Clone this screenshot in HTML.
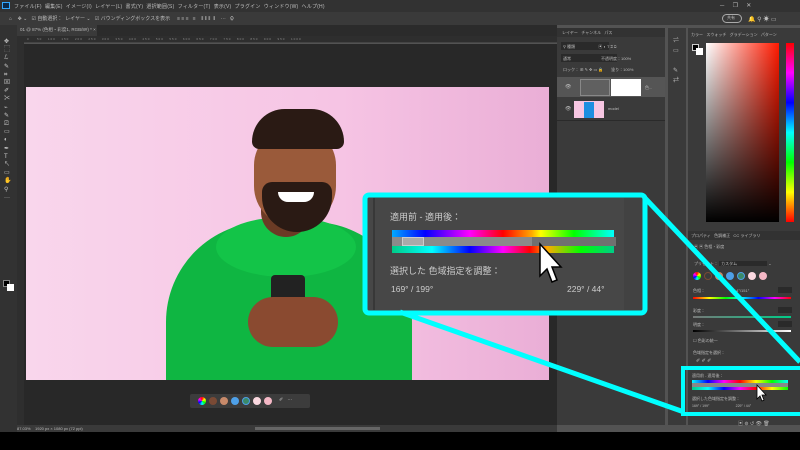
<!DOCTYPE html>
<html><head><meta charset="utf-8"><style>
*{margin:0;padding:0;box-sizing:border-box}
body{width:800px;height:450px;overflow:hidden;background:#000;font-family:"Liberation Sans","Noto Sans CJK JP",sans-serif;position:relative;color:#ccc}
.a{position:absolute}
.t{font-size:5px;color:#bbb;white-space:nowrap}
</style></head><body>
<div class="a" style="left:0;top:0;width:800px;height:432px;background:#535353"></div>
<!-- menu bar -->
<div class="a" style="left:0;top:0;width:800px;height:12px;background:#323232"></div>
<div class="a" style="left:2px;top:2px;width:8px;height:7px;background:#0b2a4a;border:1px solid #31a8ff"></div>
<div class="a t" style="left:14px;top:3px;letter-spacing:0.2px">ファイル(F)&nbsp; 編集(E)&nbsp; イメージ(I)&nbsp; レイヤー(L)&nbsp; 書式(Y)&nbsp; 選択範囲(S)&nbsp; フィルター(T)&nbsp; 表示(V)&nbsp; プラグイン&nbsp; ウィンドウ(W)&nbsp; ヘルプ(H)</div>
<div class="a t" style="left:720px;top:2px;font-size:6px">─&nbsp;&nbsp;&nbsp;&nbsp;&nbsp;❐&nbsp;&nbsp;&nbsp;&nbsp;&nbsp;✕</div>
<!-- options -->
<div class="a" style="left:0;top:12px;width:800px;height:13px;background:#3a3a3a"></div>
<div class="a t" style="left:9px;top:15px">⌂&nbsp;&nbsp;&nbsp; ✥ ⌄&nbsp;&nbsp; ☑ 自動選択：&nbsp; レイヤー ⌄&nbsp;&nbsp; ☑ バウンディングボックスを表示&nbsp;&nbsp;&nbsp;&nbsp; ≡ ≡ ≡ &nbsp; ≡&nbsp;&nbsp;&nbsp; ⫴ ⫴ ⫴ &nbsp;⫴&nbsp;&nbsp;&nbsp; ··· &nbsp;&nbsp;⚙</div>
<div class="a" style="left:722px;top:14px;width:20px;height:9px;border:1px solid #aaa;border-radius:5px"></div>
<div class="a t" style="left:727px;top:15px;font-size:4px">共有</div>
<div class="a t" style="left:748px;top:14px;font-size:6px">🔔 ⚲ ☀ ▭</div>
<!-- tab bar -->
<div class="a" style="left:17px;top:25px;width:540px;height:11px;background:#2b2b2b"></div>
<div class="a" style="left:17px;top:25px;width:80px;height:11px;background:#3a3a3a"></div>
<div class="a t" style="left:20px;top:27px;font-size:4.5px">01 @ 87% (色相・彩度1, RGB/8#) * ×</div>
<!-- rulers -->
<div class="a" style="left:17px;top:36px;width:540px;height:7px;background:#2e2e2e;border-bottom:1px solid #444"></div>
<div class="a t" style="left:27px;top:37px;font-size:3px;color:#888;letter-spacing:1px">0&nbsp;&nbsp;&nbsp;&nbsp;50&nbsp;&nbsp;&nbsp;100&nbsp;&nbsp;&nbsp;150&nbsp;&nbsp;&nbsp;200&nbsp;&nbsp;&nbsp;250&nbsp;&nbsp;&nbsp;300&nbsp;&nbsp;&nbsp;350&nbsp;&nbsp;&nbsp;400&nbsp;&nbsp;&nbsp;450&nbsp;&nbsp;&nbsp;500&nbsp;&nbsp;&nbsp;550&nbsp;&nbsp;&nbsp;600&nbsp;&nbsp;&nbsp;650&nbsp;&nbsp;&nbsp;700&nbsp;&nbsp;&nbsp;750&nbsp;&nbsp;&nbsp;800&nbsp;&nbsp;&nbsp;850&nbsp;&nbsp;&nbsp;900&nbsp;&nbsp;&nbsp;950&nbsp;&nbsp;&nbsp;1000</div>
<div class="a" style="left:17px;top:36px;width:7px;height:389px;background:#2e2e2e"></div>
<!-- toolbar -->
<div class="a" style="left:0;top:25px;width:17px;height:407px;background:#323232"></div>
<div class="a t" style="left:4px;top:38px;font-size:6px;line-height:8.2px;color:#ccc">✥<br>⬚<br>ℒ<br>✎<br>⌗<br>⊠<br>✐<br>✂<br>⌁<br>✎<br>⎚<br>▭<br>◐<br>✒<br>T<br>↖<br>▭<br>✋<br>⚲<br>···</div>
<div class="a" style="left:3px;top:280px;width:7px;height:7px;background:#000;border:1px solid #888"></div>
<div class="a" style="left:7px;top:284px;width:7px;height:7px;background:#fff"></div>
<!-- canvas -->
<div class="a" style="left:24px;top:44px;width:533px;height:381px;background:#282828"></div>
<div class="a" style="left:26px;top:87px;width:523px;height:293px;background:linear-gradient(90deg,#f9d6ec,#f6c4e4 60%,#eaaed6);overflow:hidden">
 <!-- hoodie -->
 <div class="a" style="left:140px;top:135px;width:246px;height:200px;background:#0fb642;border-radius:100px 100px 0 0"></div>
 <div class="a" style="left:190px;top:130px;width:140px;height:60px;background:#13c448;border-radius:50%"></div>
 <!-- neck -->
 <div class="a" style="left:235px;top:110px;width:50px;height:40px;background:#6b3b25;border-radius:0 0 25px 25px"></div>
 <!-- head -->
 <div class="a" style="left:228px;top:40px;width:82px;height:100px;background:#9a5a3a;border-radius:42px 42px 45px 45px"></div>
 <div class="a" style="left:226px;top:22px;width:92px;height:40px;background:#2a1a14;border-radius:45px 45px 10px 10px"></div>
 <div class="a" style="left:236px;top:95px;width:70px;height:50px;background:#2a1a14;border-radius:10px 10px 35px 35px"></div>
 <div class="a" style="left:252px;top:105px;width:36px;height:10px;background:#fff;border-radius:0 0 18px 18px"></div>
 <!-- phone & hands -->
 <div class="a" style="left:245px;top:188px;width:34px;height:40px;background:#222;border-radius:4px"></div>
 <div class="a" style="left:222px;top:210px;width:90px;height:50px;background:#8a4a30;border-radius:30px"></div>
</div>
<!-- floating swatch bar -->
<div class="a" style="left:190px;top:394px;width:120px;height:14px;background:#3c3c3c;border-radius:2px"></div>
<div class="a" style="left:198px;top:397px;width:8px;height:8px;border-radius:50%;background:conic-gradient(red,yellow,lime,cyan,blue,magenta,red)"></div>
<div class="a" style="left:209px;top:397px;width:8px;height:8px;border-radius:50%;background:#7a4a35"></div>
<div class="a" style="left:220px;top:397px;width:8px;height:8px;border-radius:50%;background:#c88a6a"></div>
<div class="a" style="left:231px;top:397px;width:8px;height:8px;border-radius:50%;background:#4ea0e8"></div>
<div class="a" style="left:242px;top:397px;width:8px;height:8px;border-radius:50%;background:#3a8a6a;border:1px solid #4ea0e8"></div>
<div class="a" style="left:253px;top:397px;width:8px;height:8px;border-radius:50%;background:#fbd8e0"></div>
<div class="a" style="left:264px;top:397px;width:8px;height:8px;border-radius:50%;background:#f5b8c6"></div>
<div class="a t" style="left:279px;top:397px">✐&nbsp;&nbsp;&nbsp;···</div>
<!-- status -->
<div class="a" style="left:17px;top:425px;width:540px;height:7px;background:#3a3a3a"></div>
<div class="a t" style="left:17px;top:426px;font-size:4px">87.03%&nbsp;&nbsp;&nbsp; 1920 px × 1080 px (72 ppi)</div>
<div class="a" style="left:255px;top:427px;width:125px;height:3px;background:#666"></div>
<!-- layers panel -->
<div class="a" style="left:557px;top:28px;width:108px;height:397px;background:#3a3a3a"></div>
<div class="a" style="left:557px;top:28px;width:108px;height:9px;background:#323232"></div>
<div class="a t" style="left:562px;top:30px;font-size:4px">レイヤー&nbsp;&nbsp; チャンネル&nbsp;&nbsp; パス</div>
<div class="a" style="left:561px;top:42px;width:48px;height:8px;background:#2a2a2a"></div>
<div class="a t" style="left:563px;top:44px;font-size:4px">⚲ 種類&nbsp;&nbsp;&nbsp;&nbsp;&nbsp;&nbsp;&nbsp;&nbsp;&nbsp;&nbsp;&nbsp;&nbsp;&nbsp;&nbsp;&nbsp;&nbsp;&nbsp;&nbsp;&nbsp;&nbsp; ▣ ◐ T ⌗ ⊡</div>
<div class="a" style="left:561px;top:54px;width:56px;height:8px;background:#2a2a2a"></div>
<div class="a t" style="left:563px;top:56px;font-size:4px">通常&nbsp;&nbsp;&nbsp;&nbsp;&nbsp;&nbsp;&nbsp;&nbsp;&nbsp;&nbsp;&nbsp;&nbsp;&nbsp;&nbsp;&nbsp;&nbsp;&nbsp;&nbsp;&nbsp;&nbsp;&nbsp;&nbsp;&nbsp;&nbsp;&nbsp;&nbsp; 不透明度：100%</div>
<div class="a t" style="left:563px;top:67px;font-size:4px">ロック： ⊞ ✎ ✥ ▭ 🔒&nbsp;&nbsp;&nbsp;&nbsp;&nbsp;&nbsp; 塗り：100%</div>
<div class="a" style="left:557px;top:77px;width:108px;height:20px;background:#555"></div>
<div class="a" style="left:580px;top:79px;width:30px;height:17px;background:#606060;border:1px solid #888"></div>
<div class="a" style="left:611px;top:79px;width:30px;height:17px;background:#fff"></div>
<div class="a t" style="left:565px;top:84px">👁</div><div class="a t" style="left:645px;top:85px;font-size:4px">色...</div>
<div class="a" style="left:574px;top:101px;width:30px;height:17px;background:#f7c6e2"></div>
<div class="a" style="left:584px;top:102px;width:10px;height:16px;background:#1d8fe0"></div>
<div class="a t" style="left:565px;top:106px">👁</div><div class="a t" style="left:608px;top:106px;font-size:4px">model</div>
<div class="a" style="left:557px;top:120px;width:108px;height:1px;background:#2a2a2a"></div>
<!-- icon strip -->
<div class="a" style="left:668px;top:28px;width:18px;height:397px;background:#3a3a3a"></div>
<div class="a t" style="left:673px;top:36px;font-size:6px;line-height:10px">⇌<br>▭<br><br>✎<br>⇄</div>
<!-- color panel -->
<div class="a" style="left:688px;top:28px;width:112px;height:200px;background:#3a3a3a"></div>
<div class="a t" style="left:691px;top:32px;font-size:4px">カラー&nbsp;&nbsp; スウォッチ&nbsp;&nbsp; グラデーション&nbsp;&nbsp; パターン</div>
<div class="a" style="left:692px;top:44px;width:7px;height:7px;background:#000;border:1px solid #ccc"></div>
<div class="a" style="left:696px;top:48px;width:7px;height:7px;background:#fff"></div>
<div class="a" style="left:706px;top:43px;width:73px;height:179px;background:linear-gradient(to bottom,transparent,#000),linear-gradient(to right,#fff,#ff1a00)"></div>
<div class="a" style="left:786px;top:43px;width:8px;height:179px;background:linear-gradient(to bottom,red,magenta,blue,cyan,lime,yellow,red)"></div>
<!-- properties panel -->
<div class="a" style="left:688px;top:228px;width:112px;height:197px;background:#3a3a3a"></div>
<div class="a" style="left:688px;top:231px;width:112px;height:9px;background:#323232"></div>
<div class="a t" style="left:691px;top:233px;font-size:4px">プロパティ&nbsp;&nbsp; 色調補正&nbsp;&nbsp; CC ライブラリ</div>
<div class="a t" style="left:694px;top:244px;font-size:4px">▣ ▣ 色相・彩度</div>
<div class="a t" style="left:694px;top:261px;font-size:4px">プリセット： <span style="background:#2a2a2a;padding:0 30px 0 2px">カスタム</span> ⌄</div>
<div class="a" style="left:693px;top:272px;width:8px;height:8px;border-radius:50%;background:conic-gradient(red,yellow,lime,cyan,blue,magenta,red)"></div>
<div class="a" style="left:704px;top:272px;width:8px;height:8px;border-radius:50%;border:1px solid #7a4a35"></div>
<div class="a" style="left:715px;top:272px;width:8px;height:8px;border-radius:50%;background:#c88a6a"></div>
<div class="a" style="left:726px;top:272px;width:8px;height:8px;border-radius:50%;background:#4ea0e8"></div>
<div class="a" style="left:737px;top:272px;width:8px;height:8px;border-radius:50%;background:#3a8a6a;border:1px solid #4ea0e8"></div>
<div class="a" style="left:748px;top:272px;width:8px;height:8px;border-radius:50%;background:#fbd8e0"></div>
<div class="a" style="left:759px;top:272px;width:8px;height:8px;border-radius:50%;background:#f5b8c6"></div>
<div class="a t" style="left:693px;top:288px;font-size:4px">色相：&nbsp;&nbsp;&nbsp;&nbsp;&nbsp;&nbsp;&nbsp;&nbsp;&nbsp;&nbsp;&nbsp;&nbsp;&nbsp;&nbsp;&nbsp;&nbsp;&nbsp;&nbsp;&nbsp;&nbsp;&nbsp;&nbsp;&nbsp; 214°/151°</div>
<div class="a" style="left:778px;top:287px;width:14px;height:6px;background:#2a2a2a"></div>
<div class="a" style="left:693px;top:297px;width:98px;height:2px;background:linear-gradient(90deg,red,yellow,lime,cyan,blue,magenta,red)"></div>
<div class="a t" style="left:693px;top:308px;font-size:4px">彩度：</div>
<div class="a" style="left:778px;top:307px;width:14px;height:6px;background:#2a2a2a"></div>
<div class="a" style="left:693px;top:316px;width:98px;height:2px;background:linear-gradient(90deg,#777,#0c8)"></div>
<div class="a t" style="left:693px;top:322px;font-size:4px">明度：</div>
<div class="a" style="left:778px;top:321px;width:14px;height:6px;background:#2a2a2a"></div>
<div class="a" style="left:693px;top:330px;width:98px;height:2px;background:linear-gradient(90deg,#000,#fff)"></div>
<div class="a t" style="left:693px;top:338px;font-size:4px">☐ 色彩の統一</div>
<div class="a t" style="left:693px;top:350px;font-size:4px">色域指定を選択：</div>
<div class="a t" style="left:696px;top:358px;font-size:5px">✐ ✐ ✐</div>
<div class="a t" style="left:692px;top:373px;font-size:4px">適用前 - 適用後：</div>
<div class="a" style="left:692px;top:380px;width:96px;height:3px;background:linear-gradient(90deg,cyan,blue,magenta,red,yellow,lime,cyan)"></div>
<div class="a" style="left:692px;top:383px;width:96px;height:4px;background:#888"></div>
<div class="a" style="left:692px;top:387px;width:96px;height:3px;background:linear-gradient(90deg,#0c8,cyan,blue,magenta,red,yellow,lime)"></div>
<div class="a t" style="left:692px;top:396px;font-size:4px">選択した色域指定を調整：</div>
<div class="a t" style="left:692px;top:404px;font-size:3.5px">169° / 199°&nbsp;&nbsp;&nbsp;&nbsp;&nbsp;&nbsp;&nbsp;&nbsp;&nbsp;&nbsp;&nbsp;&nbsp;&nbsp;&nbsp;&nbsp;&nbsp;&nbsp;&nbsp;&nbsp;&nbsp;&nbsp;&nbsp;&nbsp;&nbsp;&nbsp;&nbsp; 229° / 44°</div>
<div class="a t" style="left:738px;top:420px;font-size:5px">▣ ⊚ ↺ 👁 🗑</div>
<!-- callout -->
<div class="a" style="left:365px;top:195px;width:281px;height:118px;background:#474747"></div>
<div class="a" style="left:373px;top:198px;width:2px;height:112px;background:#383838"></div>
<div class="a" style="left:624px;top:198px;width:18px;height:112px;background:#424242"></div>
<div class="a t" style="left:390px;top:210px;font-size:9px;color:#ccc">適用前 - 適用後：</div>
<div class="a" style="left:392px;top:230px;width:222px;height:7px;background:linear-gradient(90deg,#0af,blue 15%,#f0f 35%,red 50%,#fa0 63%,yellow 67%,lime 82%,cyan)"></div>
<div class="a" style="left:392px;top:237px;width:222px;height:9px;background:#8a8a8a"></div>
<div class="a" style="left:402px;top:237px;width:22px;height:9px;background:#aaa;border:1px solid #ccc"></div>
<div class="a" style="left:532px;top:237px;width:84px;height:9px;background:#707070"></div>
<div class="a" style="left:392px;top:246px;width:222px;height:7px;background:linear-gradient(90deg,#0c8,cyan 18%,blue 35%,#f0f 50%,red 62%,#fa0 70%,lime 85%,#0c8)"></div>
<div class="a t" style="left:390px;top:264px;font-size:9px;color:#ccc">選択した 色域指定を調整：</div>
<div class="a t" style="left:391px;top:284px;font-size:8.5px;color:#ccc">169° / 199°</div>
<div class="a t" style="left:567px;top:284px;font-size:8.5px;color:#ccc">229° / 44°</div>
<svg class="a" style="left:0;top:0" width="800" height="450">
<rect x="365" y="195" width="280" height="118" rx="4" fill="none" stroke="#0ff" stroke-width="5"/>
<line x1="644" y1="197" x2="800" y2="362" stroke="#0ff" stroke-width="5"/>
<line x1="400" y1="312" x2="684" y2="412" stroke="#0ff" stroke-width="5"/>
<rect x="683" y="368" width="120" height="46" fill="none" stroke="#0ff" stroke-width="4"/>
<path d="M540 244 L540 276 L547 269 L552 282 L557 280 L552 267 L561 267 Z" fill="#fff" stroke="#000" stroke-width="1.5"/>
<path d="M757 385 L757 399 L760 396 L762 401 L764 400 L762 395 L766 395 Z" fill="#fff" stroke="#000" stroke-width="0.8"/>
</svg>
</body></html>
